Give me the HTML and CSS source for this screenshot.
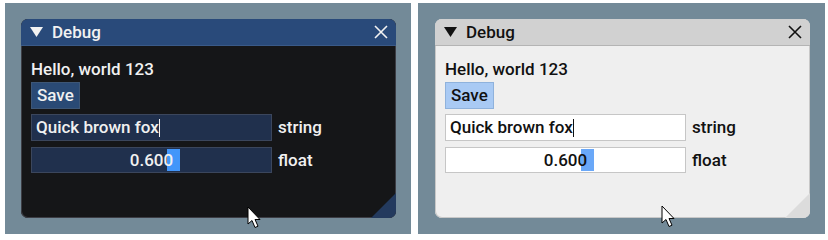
FILE: index.html
```html
<!DOCTYPE html>
<html>
<head>
<meta charset="utf-8">
<link rel="stylesheet" href="styles.css">
</head>
<body>
<div class="stage">
  <div class="panel dark">
    <div class="win">
      <div class="title">
        <svg class="tri" width="13" height="10" viewBox="0 0 13 10"><polygon points="0,0 13,0 6.5,10"/></svg>
        <span class="title-text">Debug</span>
        <svg class="close" width="14" height="14" viewBox="0 0 14 14"><path d="M1 1 L13 13 M13 1 L1 13"/></svg>
      </div>
      <div class="body">
        <div class="text">Hello, world 123</div>
        <div class="btn">Save</div>
        <div class="row r1"><div class="frame input">Quick brown fox<span class="caret"></span></div><span class="label">string</span></div>
        <div class="row r2"><div class="frame slider"><span class="grab"></span><span class="val">0.600</span></div><span class="label">float</span></div>
      </div>
      <div class="grip"></div>
    </div>
    <svg class="cursor" width="16" height="24" viewBox="0 0 16 24"><path d="M1 1 L1 18 L5 14.5 L8 21.5 L11 20.2 L8 13.5 L13 13.5 Z"/></svg>
  </div>
  <div class="panel light">
    <div class="win">
      <div class="title">
        <svg class="tri" width="13" height="10" viewBox="0 0 13 10"><polygon points="0,0 13,0 6.5,10"/></svg>
        <span class="title-text">Debug</span>
        <svg class="close" width="14" height="14" viewBox="0 0 14 14"><path d="M1 1 L13 13 M13 1 L1 13"/></svg>
      </div>
      <div class="body">
        <div class="text">Hello, world 123</div>
        <div class="btn">Save</div>
        <div class="row r1"><div class="frame input">Quick brown fox<span class="caret"></span></div><span class="label">string</span></div>
        <div class="row r2"><div class="frame slider"><span class="grab"></span><span class="val">0.600</span></div><span class="label">float</span></div>
      </div>
      <div class="grip"></div>
    </div>
    <svg class="cursor" width="16" height="24" viewBox="0 0 16 24"><path d="M1 1 L1 18 L5 14.5 L8 21.5 L11 20.2 L8 13.5 L13 13.5 Z"/></svg>
  </div>
</div>
</body>
</html>
```

FILE: styles.css
```css
* { box-sizing: border-box; }
html, body { margin: 0; padding: 0; background: #ffffff; }
body { font-family: Roboto, "Noto Sans", sans-serif; font-weight: 500; font-size: 17px; }

.stage {
  display: flex;
  gap: 7px;
  padding: 3px 0 0 5px;
}

.panel {
  position: relative;
  width: 406px;
  height: 231px;
  background: #738a98;
  padding: 16px 0 0 16px;
}
.panel.light { width: 407px; padding-left: 17px; }

.win {
  position: relative;
  width: 375px;
  height: 199px;
  border-radius: 7px;
  overflow: hidden;
  display: flex;
  flex-direction: column;
}

.title {
  height: 27px;
  display: flex;
  align-items: center;
  padding: 0 8px 0 9px;
  flex: none;
}
.tri { margin-right: 9px; }
.title-text { flex: 1; line-height: 17px; }
.close path { stroke-width: 1.6; fill: none; }

.body {
  flex: 1;
  padding: 15px 10px 0 10px;
}
.text { line-height: 17px; height: 17px; }

.btn {
  display: inline-block;
  margin-top: 4px;
  height: 27px;
  line-height: 25px;
  padding: 0 5px;
  border: 1px solid;
}

.row { display: flex; align-items: center; }
.r1 { margin-top: 5px; }
.r2 { margin-top: 6px; }

.frame {
  position: relative;
  width: 241px;
  height: 27px;
  line-height: 25px;
  border: 1px solid;
  padding: 0 4px;
}
.caret {
  display: inline-block;
  width: 1px;
  height: 18px;
  vertical-align: -4px;
  margin-left: 0px;
}
.slider { text-align: center; padding: 0; height: 26px; line-height: 24px; }
.val { position: relative; }
.grab {
  position: absolute;
  left: 135px;
  top: 1px;
  width: 13px;
  height: 22px;
}
.label { margin-left: 6px; line-height: 17px; }

.grip {
  position: absolute;
  right: 0;
  bottom: 0;
  width: 25px;
  height: 25px;
  clip-path: polygon(100% 0, 100% 100%, 0 100%);
}

.cursor { position: absolute; left: 242px; top: 203px; }
.cursor path { fill: #ffffff; stroke: #000000; stroke-width: 1; stroke-linejoin: miter; }
.light .cursor { left: 243px; top: 202px; }

/* dark theme */
.dark .win { background: #151618; box-shadow: inset 0 0 0 1px #3c3d44; }
.dark .title { background: #294a7a; color: #f2f2f2; border-bottom: 1px solid #3a5a88; }
.dark .tri polygon { fill: #f2f2f2; }
.dark .close path { stroke: #f2f2f2; }
.dark .body { color: #f0f0f0; }
.dark .btn { background: #2a4a75; border-color: #3d5676; }
.dark .frame { background: #20304d; border-color: #3b465c; }
.dark .caret { background: #f0f0f0; }
.dark .grab { background: #4296fa; }
.dark .grip { background: #233a5e; }

/* light theme */
.light .win { background: #efefef; box-shadow: inset 0 0 0 1px #c8c8c8; }
.light .title { background: #d1d1d1; color: #111111; border-bottom: 1px solid #b4b4b4; }
.light .tri polygon { fill: #111111; }
.light .close path { stroke: #111111; }
.light .body { color: #111111; }
.light .btn { background: #a9caf4; border-color: #8fb2dc; }
.light .frame { background: #ffffff; border-color: #c6c6c6; }
.light .caret { background: #111111; }
.light .grab { background: #6aa8f8; }
.light .grip { background: #dcdcdc; }
```
